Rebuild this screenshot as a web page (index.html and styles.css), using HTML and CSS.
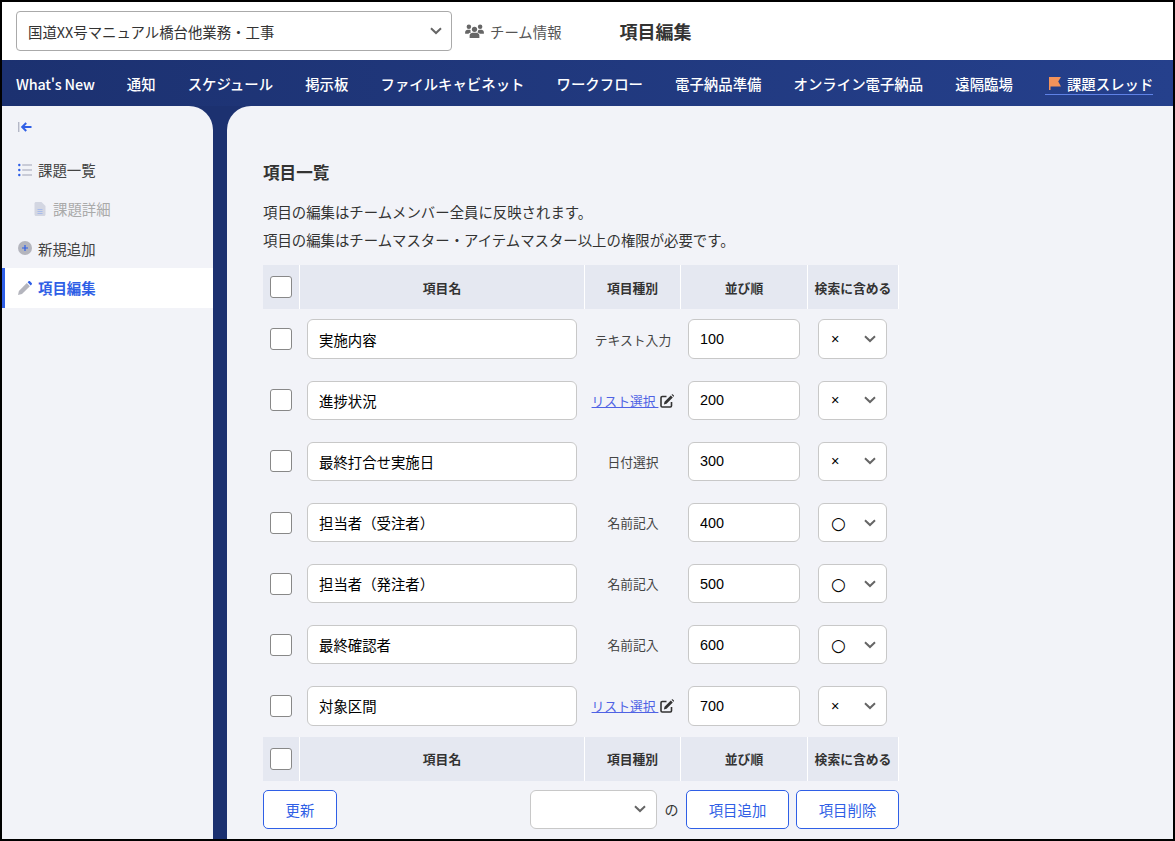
FILE: index.html
```html
<!DOCTYPE html>
<html lang="ja">
<head>
    <meta charset="UTF-8">
    <meta name="viewport" content="width=device-width, initial-scale=1.0">
    <title>項目編集</title>
    <link rel="stylesheet" href="styles.css">
</head>
<body>
    <div class="frame">
        <header class="topbar">
            <select class="team-select">
                <option>国道XX号マニュアル橋台他業務・工事</option>
            </select>
            <a class="team-info">
                <svg class="team-icon" viewBox="0 0 20 16"><circle cx="10" cy="5.600" r="2.800"/><circle cx="4" cy="2.800" r="2.400"/><circle cx="16" cy="2.800" r="2.400"/><path d="M4.800 15v-2.400C4.800 10.300 6.600 9.400 8 9.400h4c1.400 0 3.200.9 3.200 3.200V15z"/><path d="M0 10.400V8.800C0 7 1.300 6 2.700 6h2.200c.4 0 .8.200 1 .5C5.500 7.800 5.600 8.300 6.200 9 4.800 9.400 3.800 9.900 3.500 10.400zM20 10.400V8.800C20 7 18.700 6 17.300 6h-2.200c-.4 0-.8.200-1 .5-.4 1.300-.5 1.800-1.100 2.500 1.400.4 2.400.9 2.700 1.400z"/></svg>
                チーム情報
            </a>
            <h1 class="page-title">項目編集</h1>
        </header>

        <nav class="nav">
            <a class="nav-latin">What's New</a>
            <a>通知</a>
            <a>スケジュール</a>
            <a>掲示板</a>
            <a>ファイルキャビネット</a>
            <a>ワークフロー</a>
            <a>電子納品準備</a>
            <a>オンライン電子納品</a>
            <a>遠隔臨場</a>
            <a class="nav-active">
                <svg class="flag-icon" viewBox="0 0 12 13"><path d="M0 0H12L9.200 4.500 12 9.500H1.500V13H0z" fill="#f4935a"/></svg>
                課題スレッド
            </a>
        </nav>

        <div class="body">
            <aside class="sidebar">
                <div class="collapse">
                    <svg viewBox="0 0 14 12" width="14" height="12"><path d="M.7 1v10" stroke="#b4b7c6" stroke-width="1.400" fill="none"/><path d="M13.500 6H5M8.200 2 4.200 6l4 4" stroke="#2f5fe6" stroke-width="2" fill="none"/></svg>
                </div>
                <a class="side-item">
                    <svg class="side-icon" viewBox="0 0 14 12"><g fill="#2f5fe6"><circle cx="1.300" cy="1" r="1.200"/><circle cx="1.300" cy="6" r="1.200"/><circle cx="1.300" cy="11" r="1.200"/></g><path d="M4.200 1H14M4.200 6H14M4.200 11H14" stroke="#bcbfcb" stroke-width="1.700"/></svg>
                    課題一覧
                </a>
                <a class="side-item side-sub">
                    <svg class="side-icon" viewBox="0 0 11 14"><path d="M1.500 0H7l4 4v8.500c0 .8-.7 1.500-1.500 1.500h-8C.7 14 0 13.300 0 12.500v-11C0 .7.700 0 1.500 0z" fill="#d3d6e2"/><path d="M3 7.500h5M3 9.500h5M3 11.500h5" stroke="#9db4ee" stroke-width=".8"/></svg>
                    課題詳細
                </a>
                <a class="side-item">
                    <svg class="side-icon" viewBox="0 0 14 14"><circle cx="7" cy="7" r="7" fill="#b4b5bd"/><path d="M7 4v6M4 7h6" stroke="#2f5fe6" stroke-width="1.200"/></svg>
                    新規追加
                </a>
                <a class="side-item side-active">
                    <svg class="side-icon" viewBox="0 0 14 14"><path d="M0 14l.9-4L8.800 2.100l3.100 3.100L4 13.100z" fill="#b4b5bd"/><path d="M9.600 1.300 10.600.300c.4-.4 1-.4 1.400 0l1.700 1.700c.4.400.4 1 0 1.400l-1 1z" fill="#2f5fe6"/></svg>
                    項目編集
                </a>
            </aside>

            <main class="main">
                <h2 class="section-title">項目一覧</h2>
                <p class="note">項目の編集はチームメンバー全員に反映されます。</p>
                <p class="note">項目の編集はチームマスター・アイテムマスター以上の権限が必要です。</p>

                <table class="items">
                    <colgroup>
                        <col class="col-check"><col class="col-name"><col class="col-type"><col class="col-order"><col class="col-search">
                    </colgroup>
                    <thead>
                        <tr>
                            <th><input type="checkbox"></th>
                            <th>項目名</th><th>項目種別</th><th>並び順</th><th>検索に含める</th>
                        </tr>
                    </thead>
                    <tbody>
                        <tr>
                            <td><input type="checkbox"></td>
                            <td><input class="name-input" type="text" value="実施内容"></td>
                            <td>テキスト入力</td>
                            <td><input class="order-input" type="text" value="100"></td>
                            <td><select class="search-select"><option>×</option><option>○</option></select></td>
                        </tr>
                        <tr>
                            <td><input type="checkbox"></td>
                            <td><input class="name-input" type="text" value="進捗状況"></td>
                            <td class="type-link"><a>リスト選択 </a><svg class="edit-icon" viewBox="0 0 14 14"><path d="M6.500 2.500H2.200C1.500 2.500 1 3 1 3.700v8.100c0 .7.500 1.200 1.200 1.200h8.100c.7 0 1.200-.5 1.200-1.200V8" fill="none" stroke="#333" stroke-width="1.600"/><path d="M4.500 7.800 10.800 1.500l2 2-6.300 6.300-2.600.6zM11.500.8l.4-.4c.3-.3.700-.3 1 0l1 1c.3.300.3.700 0 1l-.4.400z" fill="#333"/></svg></td>
                            <td><input class="order-input" type="text" value="200"></td>
                            <td><select class="search-select"><option>×</option><option>○</option></select></td>
                        </tr>
                        <tr>
                            <td><input type="checkbox"></td>
                            <td><input class="name-input" type="text" value="最終打合せ実施日"></td>
                            <td>日付選択</td>
                            <td><input class="order-input" type="text" value="300"></td>
                            <td><select class="search-select"><option>×</option><option>○</option></select></td>
                        </tr>
                        <tr>
                            <td><input type="checkbox"></td>
                            <td><input class="name-input" type="text" value="担当者（受注者）"></td>
                            <td>名前記入</td>
                            <td><input class="order-input" type="text" value="400"></td>
                            <td><select class="search-select select-on"><option>○</option><option>×</option></select></td>
                        </tr>
                        <tr>
                            <td><input type="checkbox"></td>
                            <td><input class="name-input" type="text" value="担当者（発注者）"></td>
                            <td>名前記入</td>
                            <td><input class="order-input" type="text" value="500"></td>
                            <td><select class="search-select select-on"><option>○</option><option>×</option></select></td>
                        </tr>
                        <tr>
                            <td><input type="checkbox"></td>
                            <td><input class="name-input" type="text" value="最終確認者"></td>
                            <td>名前記入</td>
                            <td><input class="order-input" type="text" value="600"></td>
                            <td><select class="search-select select-on"><option>○</option><option>×</option></select></td>
                        </tr>
                        <tr>
                            <td><input type="checkbox"></td>
                            <td><input class="name-input" type="text" value="対象区間"></td>
                            <td class="type-link"><a>リスト選択 </a><svg class="edit-icon" viewBox="0 0 14 14"><path d="M6.500 2.500H2.200C1.500 2.500 1 3 1 3.700v8.100c0 .7.500 1.200 1.200 1.200h8.100c.7 0 1.200-.5 1.200-1.200V8" fill="none" stroke="#333" stroke-width="1.600"/><path d="M4.500 7.800 10.800 1.500l2 2-6.300 6.300-2.600.6zM11.500.8l.4-.4c.3-.3.700-.3 1 0l1 1c.3.300.3.700 0 1l-.4.400z" fill="#333"/></svg></td>
                            <td><input class="order-input" type="text" value="700"></td>
                            <td><select class="search-select"><option>×</option><option>○</option></select></td>
                        </tr>
                    </tbody>
                    <tfoot>
                        <tr>
                            <th><input type="checkbox"></th>
                            <th>項目名</th><th>項目種別</th><th>並び順</th><th>検索に含める</th>
                        </tr>
                    </tfoot>
                </table>

                <div class="actions">
                    <button class="btn btn-update">更新</button>
                    <select class="pos-select"><option></option></select>
                    <span class="pos-label">の</span>
                    <button class="btn btn-item">項目追加</button>
                    <button class="btn btn-item">項目削除</button>
                </div>
            </main>
        </div>
    </div>
</body>
</html>
```

FILE: styles.css
```css
* {
    box-sizing: border-box;
}
body {
    margin: 0;
    font-family: "Noto Sans CJK JP", "Noto Sans", sans-serif;
    color: #333;
}
select, input, button {
    font-family: inherit;
}
select {
    appearance: none;
    background-color: #fff;
    background-image: url("data:image/svg+xml,%3Csvg xmlns='http://www.w3.org/2000/svg' viewBox='0 0 12 8'%3E%3Cpath d='M1 1.200 6 6 11 1.200' fill='none' stroke='%23666' stroke-width='2'/%3E%3C/svg%3E");
    background-repeat: no-repeat;
    background-size: 12px 8px;
}
.frame {
    width: 1175px;
    height: 841px;
    border: 2px solid #000;
    overflow: hidden;
    display: flex;
    flex-direction: column;
}

/* top bar */
.topbar {
    height: 58px;
    flex: none;
    display: flex;
    align-items: center;
    padding: 0 0 0 14px;
    background: #fff;
}
.team-select {
    width: 436px;
    height: 40px;
    padding: 0 30px 0 11px;
    font-size: 14.4px;
    color: #333;
    border: 1px solid #aaa;
    border-radius: 4px;
    background-position: right 9px center;
}
.team-info {
    display: flex;
    align-items: center;
    margin-left: 13px;
    font-size: 14.4px;
    color: #555;
}
.team-icon {
    width: 19px;
    height: 15px;
    margin-right: 6px;
    fill: #666;
}
.page-title {
    margin: 0 0 0 58px;
    font-size: 18px;
    font-weight: 700;
    color: #333;
}

/* global nav */
.nav {
    height: 46px;
    flex: none;
    display: flex;
    align-items: center;
    gap: 32.150px;
    padding-left: 14px;
    background: linear-gradient(90deg, #1c3170, #25408c);
    font-size: 14.4px;
    font-weight: 500;
    color: #fff;
}
.nav-latin {
    letter-spacing: -0.2px;
}
.nav-active {
    display: flex;
    align-items: center;
    height: 23px;
    margin-top: 1px;
    padding-left: 4px;
    border-bottom: 1px solid #5f82e6;
}
.flag-icon {
    width: 12px;
    height: 13px;
    margin-right: 6px;
}

/* body */
.body {
    flex: 1;
    display: flex;
    gap: 14px;
    min-height: 0;
    background: #1c3170;
}
.sidebar {
    width: 211px;
    flex: none;
    padding-top: 15px;
    background: #f2f3f8;
    border-top-right-radius: 24px;
}
.collapse {
    display: flex;
    height: 29px;
    padding-left: 16px;
}
.side-item {
    display: flex;
    align-items: center;
    height: 39.300px;
    padding-left: 16px;
    font-size: 14.4px;
    color: #444;
}
.side-icon {
    width: 14px;
    height: 14px;
    margin-right: 6px;
}
.side-sub {
    padding-left: 31px;
    color: #aaa;
}
.side-active {
    height: 40px;
    padding-left: 13px;
    border-left: 3px solid #2f5fe6;
    background: #fff;
    color: #2f5fe6;
    font-weight: 700;
}

/* main */
.main {
    flex: 1;
    padding: 54px 0 0 36px;
    background: #f2f3f8;
    border-top-left-radius: 24px;
}
.section-title {
    margin: 0 0 14px;
    font-size: 16.6px;
    line-height: 24px;
    font-weight: 700;
    color: #333;
}
.note {
    margin: 0;
    font-size: 14.4px;
    line-height: 28px;
    color: #333;
}
.items {
    width: 636px;
    margin-top: 11px;
    table-layout: fixed;
    border-collapse: separate;
    border-spacing: 0;
    font-size: 12.8px;
}
.col-check { width: 37px; }
.col-name { width: 285px; }
.col-type { width: 96px; }
.col-order { width: 127px; }
.col-search { width: 91px; }
.items th {
    height: 44px;
    padding: 0;
    background: #e5e8f1;
    border-right: 1px solid #fff;
    font-weight: 700;
    color: #333;
}
.items td {
    height: 61.140px;
    padding: 0 0 0.8px;
    text-align: center;
    color: #444;
}
input[type="checkbox"] {
    appearance: none;
    display: block;
    width: 22px;
    height: 22px;
    margin: 0 0 0 7px;
    background: #fff;
    border: 1px solid #888;
    border-radius: 3px;
}
.name-input, .order-input {
    display: block;
    height: 39.400px;
    border: 1px solid #c8c8c8;
    border-radius: 6px;
    background: #fff;
    color: #000;
}
.name-input {
    width: 270px;
    margin-left: 7px;
    padding: 0 11px;
    font-size: 14.4px;
}
.order-input {
    width: 112px;
    margin-left: 7px;
    padding: 0 11px;
    font-family: "Liberation Sans", sans-serif;
    font-size: 14.4px;
}
.search-select {
    display: block;
    width: 69px;
    height: 39.400px;
    margin-left: 10px;
    padding: 0 0 0 12px;
    font-family: "Liberation Sans", "DejaVu Sans", sans-serif;
    font-size: 14.4px;
    color: #000;
    border: 1px solid #c8c8c8;
    border-radius: 6px;
    background-position: right 10px center;
}
.select-on {
    font-family: "DejaVu Sans", sans-serif;
    font-size: 17px;
}
.type-link a {
    color: #4f62e4;
    text-decoration: underline;
    white-space: pre;
}
.edit-icon {
    width: 14px;
    height: 14px;
    vertical-align: -2px;
    margin-left: 2px;
}

/* footer actions */
.actions {
    display: flex;
    align-items: center;
    width: 636px;
    margin-top: 9px;
}
.btn {
    height: 39px;
    background: #fff;
    border: 1px solid #2f5fe6;
    border-radius: 5px;
    font-size: 14.4px;
    color: #2f5fe6;
}
.btn-update {
    width: 74px;
    margin-right: auto;
}
.pos-select {
    width: 127px;
    height: 39px;
    border: 1px solid #c8c8c8;
    border-radius: 6px;
    background-position: right 10px center;
}
.pos-label {
    width: 29px;
    text-align: center;
    font-size: 14px;
}
.btn-item {
    width: 103px;
}
.btn-item + .btn-item {
    margin-left: 7px;
}
```
